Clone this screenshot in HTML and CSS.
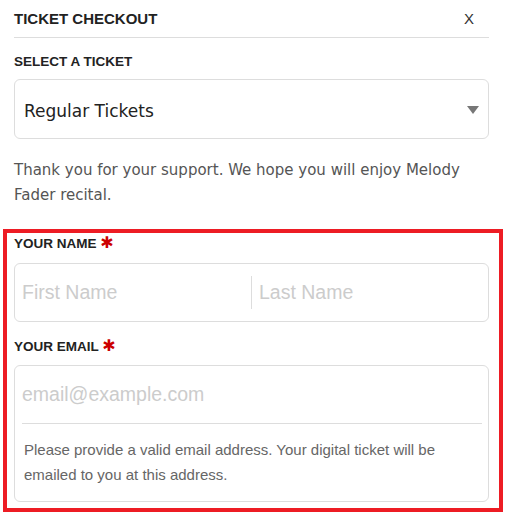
FILE: index.html
```html
<!DOCTYPE html>
<html lang="en">
<head>
  <meta charset="UTF-8">
  <title>Ticket Checkout</title>
  <link rel="stylesheet" href="styles.css">
</head>
<body>

<div class="checkout">
  <div class="header">
    <span class="title">TICKET CHECKOUT</span>
    <span class="close">X</span>
  </div>

  <div class="label select-label">SELECT A TICKET</div>
  <div class="select">
    <span class="select-text">Regular Tickets</span>
    <svg class="arrow" width="12" height="8" viewBox="0 0 12 8"><polygon points="0,0 12,0 6,8" fill="#777"/></svg>
  </div>

  <p class="intro">Thank you for your support. We hope you will enjoy Melody Fader recital.</p>

  <div class="highlight">
    <div class="label name-label">YOUR NAME <span class="req">&#10033;</span></div>
    <div class="name-box">
      <input type="text" class="field" placeholder="First Name">
      <input type="text" class="field last" placeholder="Last Name">
    </div>

    <div class="label email-label">YOUR EMAIL <span class="req">&#10033;</span></div>
    <div class="email-box">
      <input type="email" class="field email" placeholder="email@example.com">
      <div class="help">Please provide a valid email address. Your digital ticket will be emailed to you at this address.</div>
    </div>
  </div>
</div>

</body>
</html>
```

FILE: styles.css
```css
body { margin: 0; background: #fff; font-family: "Liberation Sans", Arial, sans-serif; color: #222; }
.checkout { width: 475px; margin-left: 14px; }

.header { display: flex; justify-content: space-between; align-items: center; height: 36px; padding-bottom: 1px; border-bottom: 1px solid #ddd; padding-right: 15px; }
.title { font-size: 15px; font-weight: bold; color: #222; }
.close { font-size: 15px; color: #333; }

.label { font-size: 13.5px; font-weight: bold; line-height: 16px; height: 16px; color: #222; }
.select-label { margin-top: 16px; margin-bottom: 9px; }

.select { display: flex; justify-content: space-between; align-items: center; height: 58px; border: 1px solid #ddd; border-radius: 6px; padding: 0 9px 0 9px; }
.select-text { font-family: "DejaVu Sans", Verdana, sans-serif; font-size: 17px; color: #222; padding-top: 3px; }
.arrow { margin-top: 2px; }

.intro { font-family: "DejaVu Sans", Verdana, sans-serif; font-size: 15px; line-height: 25px; color: #555; margin: 19px 0 21px; }

.highlight { border: 4px solid #ed1c24; margin: 0 -14px 0 -11px; padding: 3px 10px 6px 7px; }
.req { color: #c00; font-family: "DejaVu Sans", sans-serif; font-size: 16px; line-height: 0; }
.name-label { margin-bottom: 11px; }
.email-label { margin-top: 17px; margin-bottom: 10px; }

.name-box { display: flex; align-items: center; height: 57px; border: 1px solid #ddd; border-radius: 6px; }
.field { border: none; outline: none; background: transparent; font-family: "Liberation Sans", Arial, sans-serif; font-size: 19.5px; color: #333; padding: 0 7px; min-width: 0; }
.field::placeholder { color: #ccc; }
.name-box .field { flex: 1; height: 33px; }
.name-box .last { border-left: 1px solid #ddd; }

.email-box { border: 1px solid #ddd; border-radius: 6px; padding: 0 6px 14px 7px; }
.email-box .email { display: block; width: 100%; box-sizing: border-box; height: 58px; padding: 0; border-bottom: 1px solid #ddd; }
.help { font-size: 15px; line-height: 25px; color: #666; padding: 13px 0 0 2px; }
```
